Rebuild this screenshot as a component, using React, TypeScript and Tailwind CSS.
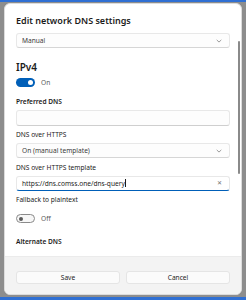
import React from "react";

const font = { fontFamily: '"Noto Sans", "Open Sans", sans-serif' };

function Chevron() {
  return (
    <svg width="6" height="4" viewBox="0 0 6 4" className="text-[#707070]">
      <path d="M0.7 0.9 L3 3.1 L5.3 0.9" fill="none" stroke="currentColor" strokeWidth="0.7" />
    </svg>
  );
}

function Select({ value }: { value: string }) {
  return (
    <div className="flex h-[15px] items-center justify-between rounded-[3px] border border-[#e8e8e8] border-b-[#d6d6d6] bg-[#fdfdfd] pl-[5px] pr-[7px] text-[6.6px] text-[#3a3a3a]">
      <span>{value}</span>
      <Chevron />
    </div>
  );
}

function Toggle({ on }: { on: boolean }) {
  return (
    <div className="flex h-[9px] items-center gap-[6px]">
      {on ? (
        <div className="flex h-[9px] w-[19px] items-center justify-end rounded-full bg-[#005fb8] pr-[2px]">
          <div className="h-[5px] w-[5px] rounded-full bg-white" />
        </div>
      ) : (
        <div className="flex h-[9px] w-[19px] items-center rounded-full border border-[#8a8a8a] bg-[#f7f7f7] pl-[2px]">
          <div className="h-[4px] w-[4px] rounded-full bg-[#5a5a5a]" />
        </div>
      )}
      <span className="text-[6.6px] text-[#5a5a5a]">{on ? "On" : "Off"}</span>
    </div>
  );
}

export default function App() {
  return (
    <div className="flex h-[300px] w-[246px] flex-col bg-[#8d8d8d]" style={font}>
      <div className="h-[2px] bg-[#2f6fd3]" />
      <div className="flex flex-1 pl-[4px] pr-[4px] pt-[1px] pb-[2px]">
        <div className="relative flex flex-1 flex-col overflow-hidden rounded-[6px] border border-[#dcdcdc] bg-white">
          <div className="flex flex-1 flex-col px-[11px] pt-[10px]">
            <div className="text-[9px] font-semibold leading-[14px] text-[#1b1b1b]">
              Edit network DNS settings
            </div>
            <div className="mt-[5px]">
              <Select value="Manual" />
            </div>
            <div className="mt-[12px] text-[10px] font-semibold leading-[14px] text-[#1b1b1b]">IPv4</div>
            <div className="mt-[4px]">
              <Toggle on />
            </div>
            <div className="mt-[10px] text-[6.6px] font-semibold leading-[10px] text-[#1b1b1b]">Preferred DNS</div>
            <div className="mt-[3px] h-[16px] rounded-[3px] border border-[#e8e8e8] border-b-[#cfcfcf] bg-[#fdfdfd]" />
            <div className="mt-[4px] text-[6.6px] leading-[10px] text-[#1b1b1b]">DNS over HTTPS</div>
            <div className="mt-[3px]">
              <Select value="On (manual template)" />
            </div>
            <div className="mt-[5px] text-[6.6px] leading-[10px] text-[#1b1b1b]">DNS over HTTPS template</div>
            <div className="mt-[3px] flex h-[15px] items-center justify-between rounded-[3px] border border-[#e8e8e8] border-b-[1.5px] border-b-[#005fb8] bg-white pl-[5px] pr-[7px] text-[6.6px] text-[#1b1b1b]">
              <span className="flex items-center">
                https://dns.comss.one/dns-query
                <span className="ml-[0.5px] inline-block h-[8px] w-[0.5px] bg-[#1b1b1b]" />
              </span>
              <span className="text-[6px] text-[#707070]">✕</span>
            </div>
            <div className="mt-[4px] text-[6.6px] leading-[10px] text-[#1b1b1b]">Fallback to plaintext</div>
            <div className="mt-[9px]">
              <Toggle on={false} />
            </div>
            <div className="mt-[14px] text-[6.6px] font-semibold leading-[10px] text-[#1b1b1b]">Alternate DNS</div>
          </div>
          <div className="flex h-[38px] gap-[6px] border-t border-[#ebebeb] bg-[#f3f3f3] px-[11px] pt-[14px]">
            <div className="flex h-[13px] flex-1 items-center justify-center rounded-[3px] border border-[#e5e5e5] bg-[#fbfbfb] text-[6.6px] text-[#1b1b1b]">
              Save
            </div>
            <div className="flex h-[13px] flex-1 items-center justify-center rounded-[3px] border border-[#e5e5e5] bg-[#fbfbfb] text-[6.6px] text-[#1b1b1b]">
              Cancel
            </div>
          </div>
          <div className="absolute right-[1px] top-[37px] h-[133px] w-[2px] rounded-full bg-[#8a8a8a]" />
        </div>
      </div>
      <div className="h-[3px] bg-[#2f6fd3]" />
    </div>
  );
}
